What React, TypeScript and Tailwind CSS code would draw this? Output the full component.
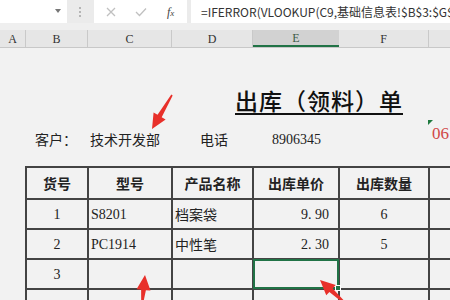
import React from "react";

const cjk = { fontFamily: '"Noto Sans CJK SC", "Noto Sans", sans-serif' };
const serif = { fontFamily: '"Liberation Serif", "Noto Sans CJK SC", serif' };

const cols = [
    { key: "A", w: 26 },
    { key: "B", w: 62 },
    { key: "C", w: 84 },
    { key: "D", w: 81 },
    { key: "E", w: 86 },
    { key: "F", w: 90 },
    { key: "G", w: 60 },
];

// arrow polygon from tail to tip
function arrowPoints(tx: number, ty: number, hx: number, hy: number) {
    const dx = hx - tx;
    const dy = hy - ty;
    const len = Math.hypot(dx, dy);
    const ux = dx / len;
    const uy = dy / len;
    const nx = -uy;
    const ny = ux;
    const headLen = 15;
    const headW = 7;
    const bx = hx - ux * headLen;
    const by = hy - uy * headLen;
    const pts = [
        [tx + nx * 0.8, ty + ny * 0.8],
        [bx + nx * 2.4, by + ny * 2.4],
        [bx + nx * headW, by + ny * headW],
        [hx, hy],
        [bx - nx * headW, by - ny * headW],
        [bx - nx * 2.4, by - ny * 2.4],
        [tx - nx * 0.8, ty - ny * 0.8],
    ];
    return pts.map((p) => p.join(",")).join(" ");
}

function Arrows() {
    return (
        <svg className="absolute inset-0 pointer-events-none" width="450" height="300">
            <polygon points={arrowPoints(172, 95, 152, 129)} fill="#e8302a" />
            <polygon points={arrowPoints(142, 305, 145, 275)} fill="#e8302a" />
            <polygon points={arrowPoints(347, 305, 320, 280)} fill="#e8302a" />
        </svg>
    );
}

function Toolbar() {
    return (
        <div className="flex h-[23px] bg-[#ebebeb]">
            <div className="relative w-[67px] bg-white">
                <span className="absolute left-[55px] top-[9px] w-0 h-0 border-l-[3px] border-r-[3px] border-t-[4px] border-l-transparent border-r-transparent border-t-[#777]" />
            </div>
            <div className="w-[27px] flex flex-col items-center justify-center gap-[2px] pr-[2px]">
                <span className="w-[2px] h-[2px] bg-[#b5b5b5]" />
                <span className="w-[2px] h-[2px] bg-[#b5b5b5]" />
                <span className="w-[2px] h-[2px] bg-[#b5b5b5]" />
            </div>
            <div className="w-[93px] bg-white flex items-center text-[#c3c3c3]">
                <svg className="ml-[12px]" width="10" height="10" viewBox="0 0 10 10">
                    <path d="M1 1 L9 9 M9 1 L1 9" stroke="#c0c0c0" strokeWidth="1.3" />
                </svg>
                <svg className="ml-[19px]" width="12" height="10" viewBox="0 0 12 10">
                    <path d="M1 5 L4.5 8.5 L11 1.5" stroke="#c0c0c0" strokeWidth="1.3" fill="none" />
                </svg>
                <span className="ml-[20px] text-[12px] italic text-[#444]" style={serif}>
                    f<span className="text-[9px]">x</span>
                </span>
            </div>
            <div className="w-[4px]" />
            <div
                className="flex-1 bg-white pl-[10px] text-[12px] leading-[23px] text-[#333] whitespace-nowrap overflow-hidden"
                style={cjk}
            >
                =IFERROR(VLOOKUP(C9,基础信息表!$B$3:$G$1
            </div>
        </div>
    );
}

function ColumnHeader() {
    return (
        <div className="flex h-[18px] bg-[#e6e6e6] border-b border-[#c8c8c8]">
            {cols.map((c) => (
                <div
                    key={c.key}
                    className={`shrink-0 flex items-center justify-center text-[12px] ${
                        c.key === "E"
                            ? "bg-[#d2d2d2] border-b-2 border-[#217346] text-[#3d5a48]"
                            : "border-r border-[#c9c9c9] text-[#333]"
                    }`}
                    style={{ width: c.w, ...serif }}
                >
                    {c.key}
                </div>
            ))}
        </div>
    );
}

const rows = [
    { no: "1", model: "S8201", name: "档案袋", price: "9. 90", qty: "6" },
    { no: "2", model: "PC1914", name: "中性笔", price: "2. 30", qty: "5" },
    { no: "3", model: "", name: "", price: "", qty: "" },
];

function DataTable() {
    const th = "border-2 border-[#444] font-bold text-[14px] text-[#222] text-center";
    const td = "border-2 border-[#444] text-[14px] text-[#222]";
    return (
        <table className="table-fixed border-collapse ml-[25px]" style={{ width: 463 }}>
            <colgroup>
                <col style={{ width: 62 }} />
                <col style={{ width: 84 }} />
                <col style={{ width: 81 }} />
                <col style={{ width: 86 }} />
                <col style={{ width: 90 }} />
                <col style={{ width: 60 }} />
            </colgroup>
            <tbody>
                <tr className="h-[32px]">
                    <td className={th} style={cjk}>货号</td>
                    <td className={th} style={cjk}>型号</td>
                    <td className={th} style={cjk}>产品名称</td>
                    <td className={th} style={cjk}>出库单价</td>
                    <td className={th} style={cjk}>出库数量</td>
                    <td className={th} />
                </tr>
                {rows.map((r, i) => (
                    <tr key={r.no} className="h-[30px]">
                        <td className={`${td} text-center`} style={serif}>{r.no}</td>
                        <td className={`${td} pl-[2px]`} style={serif}>{r.model}</td>
                        <td className={`${td} pl-[2px]`} style={cjk}>{r.name}</td>
                        <td className={`${td} text-right pr-[9px] relative p-0`} style={serif}>
                            {r.price}
                            {i === 2 && (
                                <div className="absolute -left-[1px] -top-[1px] -right-[1px] -bottom-[1px] border-2 border-[#217346]">
                                    <span className="absolute -right-[4px] -bottom-[4px] w-[6px] h-[6px] bg-[#217346] border border-white" />
                                </div>
                            )}
                        </td>
                        <td className={`${td} text-center`} style={serif}>{r.qty}</td>
                        <td className={td} />
                    </tr>
                ))}
                <tr className="h-[30px]">
                    <td className={`${td} text-center align-top pt-[8px]`} style={serif}>4</td>
                    <td className={td} />
                    <td className={td} />
                    <td className={td} />
                    <td className={td} />
                    <td className={td} />
                </tr>
            </tbody>
        </table>
    );
}

export default function App() {
    return (
        <div className="relative w-[450px] h-[300px] overflow-hidden bg-[#f2f2f2]">
            <Toolbar />
            <div className="h-[7px] bg-[#efefef]" />
            <ColumnHeader />

            {/* 标题 */}
            <div className="h-[38px]" />
            <div className="h-[26px] pl-[235px] flex items-end">
                <span
                    className="text-[23px] leading-[24px] font-medium text-[#111] underline decoration-[1.5px] underline-offset-[3px] tracking-[1px] whitespace-nowrap"
                    style={cjk}
                >
                    出库（领料）单
                </span>
            </div>

            {/* 客户信息 */}
            <div className="relative h-[54px] flex items-center text-[14px] text-[#222] whitespace-nowrap" style={cjk}>
                <span className="ml-[35px] w-[55px]">客户：</span>
                <span className="w-[110px]">技术开发部</span>
                <span className="w-[72px]">电话</span>
                <span className="text-[14px]" style={serif}>8906345</span>
                <span className="absolute left-[432px] top-[9px] text-[17px] text-[#d04848]" style={serif}>06</span>
                <span className="absolute left-[428px] top-[8px] w-0 h-0 border-t-[5px] border-r-[5px] border-t-[#1f7a3f] border-r-transparent" />
            </div>

            <DataTable />
            <Arrows />
        </div>
    );
}
